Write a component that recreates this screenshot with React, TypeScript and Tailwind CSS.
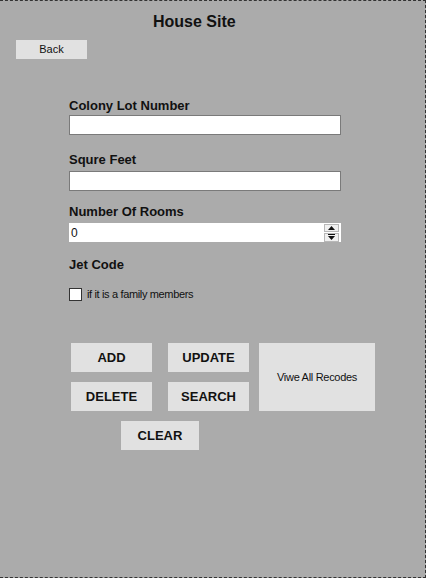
const font = { fontFamily: '"Liberation Sans", Arial, sans-serif' };

const Label = ({ text, className = "" }: { text: string; className?: string }) => (
  <div className={`h-[15px] text-[13px] leading-[15px] font-bold text-[#111] ${className}`}>{text}</div>
);

const TextBox = ({ className = "" }: { className?: string }) => (
  <div className={`h-[20px] w-[272px] bg-white border border-[#7a7a7a] ${className}`} />
);

const ActionButton = ({ text }: { text: string }) => (
  <button className="flex h-[29px] w-[81px] items-center justify-center bg-[#e1e1e1] text-[13px] font-bold text-[#111]">
    {text}
  </button>
);

const Spinner = () => (
  <div className="flex h-[18px] w-[15px] flex-col gap-[1px] self-center">
    <div className="flex h-[8px] items-center justify-center border border-[#b8b8b8] bg-[#f0f0f0]">
      <svg width="7" height="4" viewBox="0 0 7 4">
        <path d="M3.5 0 L7 4 L0 4 Z" fill="#111" />
      </svg>
    </div>
    <div className="flex h-[9px] flex-col items-center justify-center gap-[1px] border border-[#b8b8b8] bg-[#f0f0f0]">
      <div className="h-[1px] w-[7px] bg-[#111]" />
      <svg width="7" height="4" viewBox="0 0 7 4">
        <path d="M0 0 L7 0 L3.5 4 Z" fill="#111" />
      </svg>
    </div>
  </div>
);

export default function App() {
  return (
    <div
      style={font}
      className="flex h-[578px] w-[426px] flex-col border-t border-r border-b border-dashed border-[#333] bg-[#ababab]"
    >
      <div className="mt-[12px] pl-[153px] text-[16px] leading-[18px] font-bold text-[#111]">House Site</div>

      <button className="mt-[9px] ml-[16px] flex h-[19px] w-[71px] items-center justify-center bg-[#e1e1e1] text-[11px] text-[#111]">
        Back
      </button>

      <div className="flex flex-col pl-[69px]">
        <Label text="Colony Lot Number" className="mt-[39px]" />
        <TextBox className="mt-[2px]" />

        <Label text="Squre Feet" className="mt-[17px]" />
        <TextBox className="mt-[4px]" />

        <Label text="Number Of Rooms" className="mt-[13px]" />
        <div className="mt-[4px] flex h-[19px] w-[272px] items-center bg-white pr-[2px] pl-[2px]">
          <span className="flex-1 text-[12px] leading-[14px] text-[#111]">0</span>
          <Spinner />
        </div>

        <Label text="Jet Code" className="mt-[15px]" />

        <label className="mt-[16px] flex items-center gap-[5px]">
          <span className="h-[13px] w-[13px] border border-[#333] bg-white" />
          <span className="text-[11px] leading-[13px] tracking-[-0.35px] text-[#111]">if it is a family members</span>
        </label>
      </div>

      <div className="mt-[42px] flex gap-[10px] pl-[71px]">
        <div className="grid grid-cols-2 gap-x-[16px] gap-y-[10px]">
          <ActionButton text="ADD" />
          <ActionButton text="UPDATE" />
          <ActionButton text="DELETE" />
          <ActionButton text="SEARCH" />
        </div>
        <button className="flex h-[68px] w-[116px] items-center justify-center bg-[#e1e1e1] text-[11px] tracking-[-0.3px] text-[#111]">
          Viwe All Recodes
        </button>
      </div>

      <div className="mt-[10px] pl-[121px]">
        <button className="flex h-[29px] w-[78px] items-center justify-center bg-[#e1e1e1] text-[13px] font-bold text-[#111]">
          CLEAR
        </button>
      </div>
    </div>
  );
}
